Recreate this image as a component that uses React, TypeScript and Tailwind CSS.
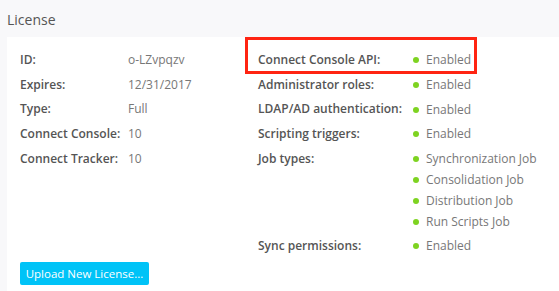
import React from "react";

const Dot = () => <span className="inline-block w-[6px] h-[6px] rounded-full bg-[#7ed321] mr-[7px] shrink-0" />;

function Row({ label, children }: { label: string; children: React.ReactNode }) {
  return (
    <div className="flex items-start">
      <div className="w-[108px] h-[24.7px] leading-[24.7px] font-semibold text-[#555]">{label}</div>
      <div className="h-[24.7px] leading-[24.7px] text-[#777]">{children}</div>
    </div>
  );
}

function RRow({ label, children }: { label: string; children: React.ReactNode }) {
  return (
    <div className="flex items-start">
      <div className="w-[155px] h-[24.7px] leading-[24.7px] font-semibold text-[#555] whitespace-nowrap">{label}</div>
      <div className="text-[#777]">{children}</div>
    </div>
  );
}

const Enabled = ({ text = "Enabled", h = "h-[24.7px]" }: { text?: string; h?: string }) => (
  <div className={`flex items-center ${h}`}>
    <Dot />
    <span>{text}</span>
  </div>
);

export default function App() {
  return (
    <div className="w-[559px] h-[291px] bg-[#f8f8fa] overflow-hidden relative text-[12px]" style={{ fontFamily: '"Open Sans", sans-serif' }}>
      <div className="pl-[7px] pt-[10px] h-[37px] text-[14px] leading-[20px] text-[#555]">License</div>
      <div className="ml-[7px] bg-white pl-[13px] pt-[11px] h-[254px]">
        <div className="flex">
          <div className="w-[225px]">
            <Row label="ID:">o-LZvpqzv</Row>
            <Row label="Expires:">12/31/2017</Row>
            <Row label="Type:">Full</Row>
            <Row label="Connect Console:">10</Row>
            <Row label="Connect Tracker:">10</Row>
          </div>
          <div className="ml-[13px]">
            <RRow label="Connect Console API:"><Enabled /></RRow>
            <RRow label="Administrator roles:"><Enabled /></RRow>
            <RRow label="LDAP/AD authentication:"><Enabled /></RRow>
            <RRow label="Scripting triggers:"><Enabled /></RRow>
            <RRow label="Job types:">
              <div className="flex flex-col pt-[2px] pb-[2px]">
                <Enabled text="Synchronization Job" h="h-[20.8px]" />
                <Enabled text="Consolidation Job" h="h-[20.8px]" />
                <Enabled text="Distribution Job" h="h-[20.8px]" />
                <Enabled text="Run Scripts Job" h="h-[20.8px]" />
              </div>
            </RRow>
            <RRow label="Sync permissions:"><Enabled /></RRow>
          </div>
        </div>
        <button className="mt-[3px] h-[23px] w-[129px] rounded-[2px] bg-[#00c3f7] text-white text-[11.5px] leading-[23px] text-center">
          Upload New License...
        </button>
      </div>
      <div className="absolute left-[245px] top-[37px] w-[232px] h-[37px] border-[3px] border-[#ff2412]" />
    </div>
  );
}
